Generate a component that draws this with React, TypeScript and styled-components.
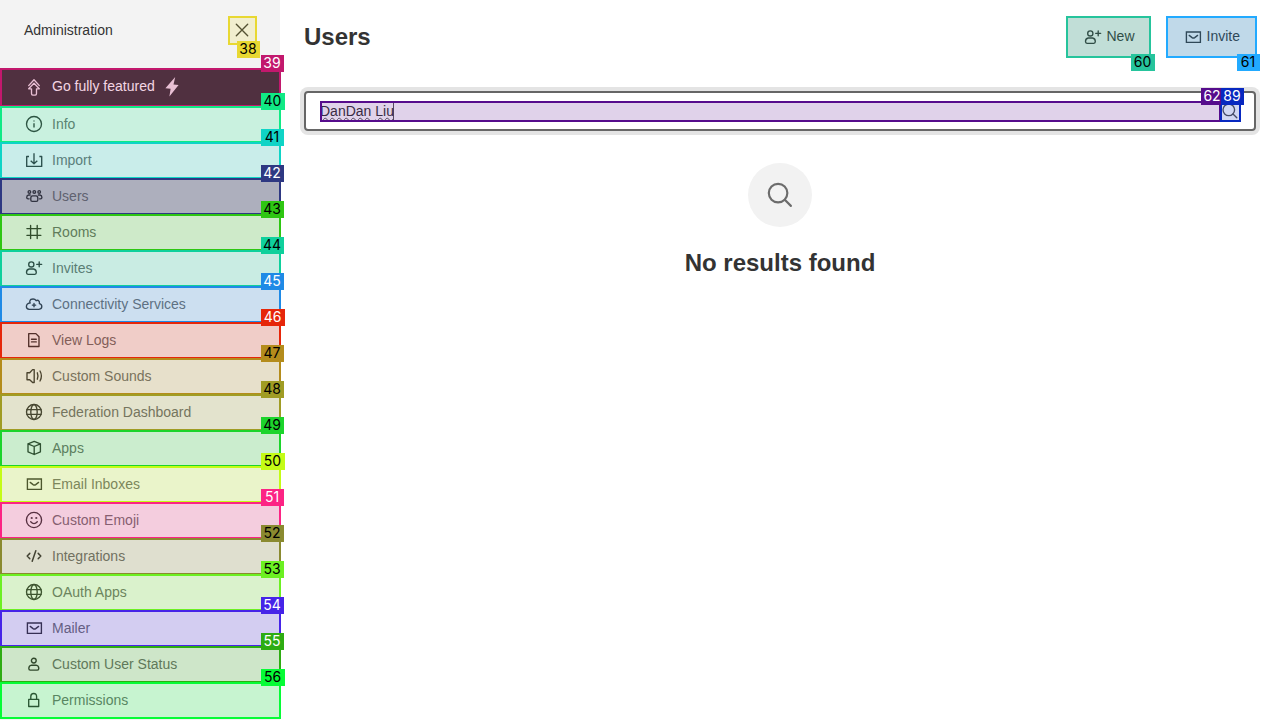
import React from 'react';
import styled, { createGlobalStyle } from 'styled-components';

const GlobalStyle = createGlobalStyle`
  *, *::before, *::after { box-sizing: border-box; }
  html, body { margin: 0; overflow: hidden; background: #fff; }
  body { font-family: "Liberation Sans", Arial, sans-serif; font-size: 14px; line-height: 20px; color: #333; }
`;

const Page = styled.div`
  display: flex;
  width: 1280px;
  height: 720px;
  overflow: hidden;
`;

const Sidebar = styled.nav`
  display: flex;
  flex-direction: column;
  flex: 0 0 280px;
  background: #f3f3f3;
  position: relative;
  z-index: 1;
`;

const SidebarHeader = styled.header`
  display: flex;
  justify-content: space-between;
  align-items: flex-start;
  height: 68px;
  padding: 16px 24px 0;
`;

const SidebarTitle = styled.span`
  line-height: 28px;
`;

const Marked = styled.div<{ $color: string; $grow?: string }>`
  position: relative;
  &::after {
    content: '';
    position: absolute;
    inset: ${(p) => p.$grow ?? '0'};
    border: 2px solid ${(p) => p.$color};
    background: ${(p) => p.$color}2f;
    pointer-events: none;
  }
`;

const Tag = styled.span<{ $color: string; $light?: boolean; $width?: number; $top: number; $right: number }>`
  position: absolute;
  z-index: 5;
  top: ${(p) => p.$top}px;
  right: ${(p) => p.$right}px;
  width: ${(p) => p.$width ?? 23}px;
  height: 17px;
  padding-right: 1px;
  text-align: center;
  font: 14px/15px Inter, sans-serif;
  white-space: nowrap;
  color: ${(p) => (p.$light ? '#fff' : '#000')};
  background: ${(p) => p.$color};
`;

const CloseButton = styled(Marked)`
  width: 29px;
  height: 29px;
  padding: 4px;
  margin-right: -1px;
`;

const NavItem = styled(Marked)<{ $tone?: 'promo' | 'selected' }>`
  display: flex;
  align-items: center;
  flex: none;
  height: ${(p) => (p.$tone === 'promo' ? 38 : 36)}px;
  padding: 0 24px ${(p) => (p.$tone === 'promo' ? 2 : 0)}px;
  gap: 8px;
  background: ${(p) => (p.$tone === 'promo' ? '#363636' : p.$tone === 'selected' ? '#cbcbcb' : 'transparent')};
  color: ${(p) => (p.$tone === 'promo' ? '#fff' : '#6c6c6c')};
  svg { color: ${(p) => (p.$tone === 'promo' ? '#f2e6ec' : '#333')}; }
`;

const Svg = styled.svg`
  display: block;
  flex: none;
  fill: none;
  stroke: currentColor;
  stroke-width: 1.35;
  stroke-linecap: round;
  stroke-linejoin: round;
  overflow: visible;
`;

const Main = styled.main`
  display: flex;
  flex-direction: column;
  flex: 1;
  padding: 16px 24px 0;
`;

const TopBar = styled.header`
  display: flex;
  align-items: flex-start;
  gap: 15px;
  height: 75px;
`;

const Title = styled.h1`
  flex: 1;
  margin: 0;
  font-size: 24px;
  line-height: 42px;
  font-weight: 700;
`;

const Button = styled(Marked)<{ $width: number }>`
  display: flex;
  align-items: center;
  gap: 4px;
  width: ${(p) => p.$width}px;
  height: 42px;
  padding-left: 16.5px;
  background: #e4e4e4;
`;

const ButtonText = styled.span`
  padding-bottom: 2px;
`;

const InviteButton = styled(Button)`
  margin-right: -1px;
`;

const SearchBox = styled.div`
  display: flex;
  height: 40px;
  padding: 8px 13px 8px 14px;
  border: 2px solid #666;
  border-radius: 4px;
  box-shadow: 0 0 0 4px #e4e4e4;
`;

const SearchInput = styled(Marked)`
  flex: 1;
  height: 21px;
  line-height: 20px;
`;

const Typed = styled.span`
  display: inline-block;
  height: 18px;
  margin-top: 1px;
  line-height: 18px;
  box-shadow: inset -1px 0 0 #555;
`;

const Misspelt = styled.span`
  text-decoration: underline wavy #555 1px;
  text-decoration-skip-ink: none;
  text-underline-offset: 1px;
`;

const SearchButton = styled(Marked)`
  width: 21px;
  height: 21px;
  margin-left: -1px;
  color: #555;
`;

const Empty = styled.section`
  display: flex;
  flex-direction: column;
  align-items: center;
  padding-top: 32px;
`;

const EmptyIcon = styled.div`
  display: grid;
  place-items: center;
  width: 64px;
  height: 64px;
  border-radius: 50%;
  background: #f2f2f2;
  color: #6c6c6c;
`;

const EmptyTitle = styled.h2`
  margin: 20px 0 0;
  font-size: 24px;
  line-height: 32px;
`;

const globe = (
  <>
    <circle cx="10" cy="10" r="7.5" />
    <ellipse cx="10" cy="10" rx="3.2" ry="7.5" />
    <path d="M3 7.6h14M3 12.4h14" />
  </>
);
const mail = (
  <>
    <path d="M3.4 5h14v10.4h-14z" strokeLinejoin="miter" />
    <path d="M6.2 8.4l2.9 2.2q1.3.9 2.6 0l2.9-2.2" />
  </>
);
const addUser = (
  <>
    <circle cx="7.3" cy="6.4" r="2.6" />
    <path d="M5.2 11h4.4q2.7.4 2.7 3.6 0 1.7-1.4 1.7H4q-1.5 0-1.5-1.7Q2.5 11.4 5.2 11zM15.2 3.8v5M12.7 6.3h5" />
  </>
);

const glyphs: Record<string, React.ReactNode> = {
  globe,
  mail,
  addUser,
  close: <path d="M4.3 4.3l11.4 11.4M15.7 4.3L4.3 15.7" />,
  upgrade: <path d="M4.7 9.6L10 3.8l5.3 5.8M10 7.2L4.7 12.8h2.8v4.8q0 1.5 1.2 1.5h2.6q1.2 0 1.2-1.5v-4.8h2.8z" />,
  info: (
    <>
      <circle cx="10" cy="10" r="7.5" />
      <path d="M10 9.2v4.2M10 6.5v.9" strokeLinecap="butt" />
    </>
  ),
  import: <path d="M5 6.5H2.7v9.9h15V6.5h-2.3M10 3.3v10.4M6.7 10.8l3.3 3 3.3-3" strokeLinecap="butt" />,
  team: (
    <>
      <circle cx="5.4" cy="5.9" r="1.3" />
      <circle cx="10.3" cy="5.9" r="1.3" />
      <circle cx="15.2" cy="5.9" r="1.3" />
      <path d="M8.5 9.8h3.6q1.7 0 1.7 2.5v1.6q0 1.4-1.4 1.4H8.2q-1.4 0-1.4-1.4v-1.6q0-2.5 1.7-2.5zM6.2 9H4.6Q2.7 9.3 2.7 11.4q0 1.4 1.4 1.4h1M14.4 9H16q1.9.3 1.9 2.4 0 1.4-1.4 1.4h-1" />
    </>
  ),
  hash: <path d="M6.6 3.4v13.2M13.2 3.4v13.2M2.9 6.6h14M2.9 13.3h14" />,
  cloud: <path d="M5.3 15.3h9.6q2.9-.3 2.9-2.8 0-2.3-2.4-2.8.4-2.6-1.1-3.2-1.2-.5-2.2.2-1-1.7-3-1.7-2.7 0-3.2 1.8-.4 1.3.3 2.2M6 8.9q-3.6.6-3.6 3.8 0 2.3 2.9 2.6M10 9.4v3.4M8.3 11.1h3.4" />,
  log: <path d="M4.7 3.6h7.2l3.1 3.2v9.7H4.7zM7.5 9.2h4.8M7.5 11.9h4.8" />,
  sound: <path d="M10.2 3.6v12.9H8.6l-2.9-2.8H3V6.7h2.7l2.9-3.1zM13.3 6.8q1.3 3.2 0 6.4M16 5q2.8 5 0 10" />,
  cube: <path d="M10.2 3.4l6.2 2.4v8l-6.2 2.7-6.2-2.7v-8zM4 5.8l6.2 2.7 6.2-2.7M10.2 8.5v8" />,
  emoji: (
    <>
      <circle cx="10" cy="10" r="7.6" />
      <circle cx="7.7" cy="8" r=".4" fill="currentColor" />
      <circle cx="12.3" cy="8" r=".4" fill="currentColor" />
      <path d="M6.7 11.8q3.3 3.6 6.6 0" />
    </>
  ),
  code: <path d="M5.8 7.4L3.2 10l2.6 2.7M14.2 7.4l2.6 2.6-2.6 2.7M11.8 4.8L8.2 15.2" strokeWidth="1.5" />,
  user: (
    <>
      <circle cx="9.8" cy="6.6" r="2.4" />
      <path d="M7.6 11.2h4.4q2.8.3 2.8 3.4 0 1.5-1.4 1.5H6.2q-1.4 0-1.4-1.5 0-3.1 2.8-3.4z" />
    </>
  ),
  lock: <path d="M4.7 9.4h10v7.1h-10zM6.8 9.2V6.5q0-3 2.9-3t2.9 3v2.7" />,
  search: (
    <>
      <circle cx="8.8" cy="8.8" r="5.8" />
      <path d="M13 13l3.8 3.8" />
    </>
  ),
};

const Icon = ({ name, size = 20 }: { name: string; size?: number }) => (
  <Svg width={size} height={size} viewBox="0 0 20 20">{glyphs[name]}</Svg>
);

const Bolt = () => (
  <Svg width="16" height="20" viewBox="0 0 16 20">
    <path d="M12.2 1L2.4 12.3l5.2.5L6.4 20.5 15.6 9l-5.1-.5z" fill="currentColor" stroke="none" />
  </Svg>
);

type Item = { id: number; label: string; icon: string; color: string; light?: boolean; width?: number; tone?: 'promo' | 'selected' };

const items: Item[] = [
  { id: 39, label: 'Go fully featured', icon: 'upgrade', color: '#c2186d', light: true, tone: 'promo' },
  { id: 40, label: 'Info', icon: 'info', color: '#10ea85', width: 24 },
  { id: 41, label: 'Import', icon: 'import', color: '#0fd4c6' },
  { id: 42, label: 'Users', icon: 'team', color: '#2e3882', light: true, tone: 'selected' },
  { id: 43, label: 'Rooms', icon: 'hash', color: '#2ec612' },
  { id: 44, label: 'Invites', icon: 'addUser', color: '#0fd09c' },
  { id: 45, label: 'Connectivity Services', icon: 'cloud', color: '#1f8ae6', light: true },
  { id: 46, label: 'View Logs', icon: 'log', color: '#e6260a', light: true, width: 24 },
  { id: 47, label: 'Custom Sounds', icon: 'sound', color: '#b48c1c' },
  { id: 48, label: 'Federation Dashboard', icon: 'globe', color: '#a09c24' },
  { id: 49, label: 'Apps', icon: 'cube', color: '#1cd42c' },
  { id: 50, label: 'Email Inboxes', icon: 'mail', color: '#c4fc16', width: 24 },
  { id: 51, label: 'Custom Emoji', icon: 'emoji', color: '#fc2484', light: true },
  { id: 52, label: 'Integrations', icon: 'code', color: '#8a8a30' },
  { id: 53, label: 'OAuth Apps', icon: 'globe', color: '#6cf022' },
  { id: 54, label: 'Mailer', icon: 'mail', color: '#4624e8', light: true },
  { id: 55, label: 'Custom User Status', icon: 'user', color: '#2eac12', light: true },
  { id: 56, label: 'Permissions', icon: 'lock', color: '#06fc36', width: 24 },
];

export default function App() {
  return (
    <Page>
      <GlobalStyle />
      <Sidebar>
        <SidebarHeader>
          <SidebarTitle>Administration</SidebarTitle>
          <CloseButton $color="#e8d832">
            <Icon name="close" />
            <Tag $color="#e8d832" $top={25} $right={-3}>38</Tag>
          </CloseButton>
        </SidebarHeader>
        {items.map((item) => (
          <NavItem key={item.id} $color={item.color} $tone={item.tone} $grow="0 -1px -1px 0">
            <Icon name={item.icon} />
            <span>{item.label}</span>
            {item.tone === 'promo' && <Bolt />}
            <Tag $color={item.color} $light={item.light} $width={item.width} $top={-13} $right={item.width === 24 ? -5 : -4}>
              {item.id}
            </Tag>
          </NavItem>
        ))}
      </Sidebar>
      <Main>
        <TopBar>
          <Title>Users</Title>
          <Button $color="#26c49c" $width={85}>
            <Icon name="addUser" />
            <ButtonText>New</ButtonText>
            <Tag $color="#26c49c" $width={24} $top={38} $right={-4}>60</Tag>
          </Button>
          <InviteButton $color="#22aaff" $width={91}>
            <Icon name="mail" />
            <ButtonText>Invite</ButtonText>
            <Tag $color="#22aaff" $top={38} $right={-3}>61</Tag>
          </InviteButton>
        </TopBar>
        <SearchBox>
          <SearchInput $color="#560c8c">
            <Typed><Misspelt>DanDan</Misspelt> <Misspelt>Liu</Misspelt></Typed>
            <Tag $color="#560c8c" $light $top={-13} $right={-3}>62</Tag>
          </SearchInput>
          <SearchButton $color="#0828c0">
            <Icon name="search" />
            <Tag $color="#0828c0" $light $top={-13} $right={-3}>89</Tag>
          </SearchButton>
        </SearchBox>
        <Empty>
          <EmptyIcon><Icon name="search" size={32} /></EmptyIcon>
          <EmptyTitle>No results found</EmptyTitle>
        </Empty>
      </Main>
    </Page>
  );
}
